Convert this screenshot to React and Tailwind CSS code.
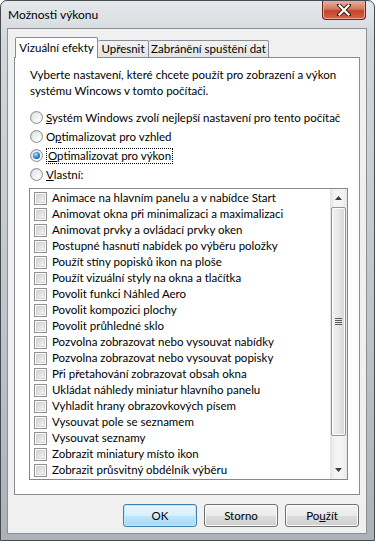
import React from 'react'

const items = [
  'Animace na hlavním panelu a v nabídce Start',
  'Animovat okna při minimalizaci a maximalizaci',
  'Animovat prvky a ovládací prvky oken',
  'Postupné hasnutí nabídek po výběru položky',
  'Použít stíny popisků ikon na ploše',
  'Použít vizuální styly na okna a tlačítka',
  'Povolit funkci Náhled Aero',
  'Povolit kompozici plochy',
  'Povolit průhledné sklo',
  'Pozvolna zobrazovat nebo vysouvat nabídky',
  'Pozvolna zobrazovat nebo vysouvat popisky',
  'Při přetahování zobrazovat obsah okna',
  'Ukládat náhledy miniatur hlavního panelu',
  'Vyhladit hrany obrazovkových písem',
  'Vysouvat pole se seznamem',
  'Vysouvat seznamy',
  'Zobrazit miniatury místo ikon',
  'Zobrazit průsvitný obdélník výběru',
]

function Radio({ checked }) {
  return (
    <span className="flex h-[13px] w-[13px] shrink-0 items-center justify-center rounded-full border border-[#8e8f8f] bg-[linear-gradient(135deg,#d2d2d2,#fafafa)]">
      <span className="flex h-[9px] w-[9px] items-center justify-center rounded-full bg-[linear-gradient(135deg,#e4e4e4,#ffffff)]">
        {checked && <span className="h-[7px] w-[7px] rounded-full bg-[radial-gradient(circle_at_40%_35%,#b4e0ff,#2a7bc4_55%,#0f4a85)]" />}
      </span>
    </span>
  )
}

function Check() {
  return (
    <span className="flex h-[13px] w-[13px] shrink-0 items-center justify-center border border-[#8e8f8f] bg-white">
      <span className="h-[9px] w-[9px] border border-[#d6d6d6] bg-[linear-gradient(135deg,#d0d0d0,#f6f6f6)]" />
    </span>
  )
}

function Btn({ children, def }) {
  return (
    <button
      className={
        def
          ? 'flex h-[23px] w-[74px] items-center justify-center rounded-[3px] border border-[#3c7fb1] bg-[linear-gradient(#eaf6fd_0%,#d9f0fc_50%,#bee6fd_51%,#a7d9f5_100%)] shadow-[inset_0_0_0_1px_#c3e7fd]'
          : 'flex h-[23px] w-[74px] items-center justify-center rounded-[3px] border border-[#707070] bg-[linear-gradient(#f2f2f2_0%,#ebebeb_50%,#dddddd_51%,#cfcfcf_100%)] shadow-[inset_0_0_0_1px_#fcfcfc]'
      }
    >
      {children}
    </button>
  )
}

export default function App() {
  return (
    <div
      className="h-[541px] w-[375px] overflow-hidden whitespace-nowrap bg-white text-[11.5px] text-black"
      style={{ fontFamily: 'Lato, "Liberation Sans", sans-serif' }}
    >
      <div className="flex h-full w-full flex-col rounded-t-[7px] border border-[#474b50] bg-[linear-gradient(#e6e9ec,#d3d7db_40px,#bfc4ca_60%,#adb2b9)]">
        {/* title bar */}
        <div className="flex h-[27px] shrink-0 items-start justify-between">
          <span className="pl-[7px] pt-[6px] text-[12px] leading-[16px]">Možnosti výkonu</span>
          <div className="mr-[8px] flex h-[19px] w-[44px] items-center justify-center rounded-b-[4px] border border-t-0 border-[#6a261b] bg-[linear-gradient(#eab1a3,#d4745c_45%,#c4412a_55%,#d8654a)] shadow-[inset_0_0_0_1px_#f0a594]">
            <svg width="14" height="12" viewBox="0 0 14 12">
              <path d="M2 1 L12 11 M12 1 L2 11" stroke="#3a1510" strokeWidth="4" strokeLinecap="square" />
              <path d="M2.5 1.5 L11.5 10.5 M11.5 1.5 L2.5 10.5" stroke="#ffffff" strokeWidth="2.2" strokeLinecap="square" />
            </svg>
          </div>
        </div>

        {/* client area */}
        <div className="ml-[6px] mr-[7px] mb-[7px] flex flex-1 flex-col border border-[#8a8f96] bg-[#f0f0f0] px-[6px] pt-[8px] pb-[6px]">
          {/* tabs */}
          <div className="flex h-[20px] shrink-0 items-end pl-[1px]">
            <div className="relative z-10 -mb-px flex h-[21px] w-[83px] items-start justify-center rounded-t-[2px] border border-b-0 border-[#898c95] bg-white pt-[2px] leading-[16px]">
              Vizuální efekty
            </div>
            <div className="flex h-[17px] w-[51px] items-center justify-center rounded-t-[2px] border border-b-0 border-l-0 border-[#898c95] bg-[linear-gradient(#f2f2f2,#e3e3e3)] leading-[16px]">
              Upřesnit
            </div>
            <div className="flex h-[17px] w-[120px] items-center justify-center rounded-t-[2px] border border-b-0 border-l-0 border-[#898c95] bg-[linear-gradient(#f2f2f2,#e3e3e3)] leading-[16px]">
              Zabránění spuštění dat
            </div>
          </div>

          {/* panel */}
          <div className="flex h-[438px] shrink-0 flex-col border border-[#898c95] bg-white px-[15px] pt-[9px]">
            <p className="leading-[16px]">
              Vyberte nastavení, které chcete použít pro zobrazení a výkon
              <br />
              systému Wincows v tomto počítači.
            </p>

            <div className="mt-[9px] flex flex-col">
              <label className="flex h-[19px] items-center gap-[3px]">
                <Radio />
                <span><u>S</u>ystém Windows zvolí nejlepší nastavení pro tento počítač</span>
              </label>
              <label className="flex h-[19px] items-center gap-[3px]">
                <Radio />
                <span>O<u>p</u>timalizovat pro vzhled</span>
              </label>
              <label className="flex h-[19px] items-center gap-[3px]">
                <Radio checked />
                <span className="border border-dotted border-black px-px leading-[14px]">
                  <u>O</u>ptimalizovat pro výkon
                </span>
              </label>
              <label className="flex h-[19px] items-center gap-[3px]">
                <Radio />
                <span><u>V</u>lastní:</span>
              </label>
            </div>

            {/* list */}
            <div className="-ml-px mr-[-4px] mt-[4px] flex h-[292px] border border-[#828790] bg-white">
              <div className="flex flex-1 flex-col overflow-hidden pl-[4px] pt-px">
                {items.map((t) => (
                  <div key={t} className="flex h-[16px] shrink-0 items-center gap-[5px]">
                    <Check />
                    <span className="leading-[16px]">{t}</span>
                  </div>
                ))}
              </div>
              {/* scrollbar */}
              <div className="flex w-[17px] shrink-0 flex-col bg-[linear-gradient(90deg,#e3e3e3,#f4f4f4_30%,#f4f4f4_70%,#e8e8e8)]">
                <div className="flex h-[18px] items-center justify-center">
                  <svg width="7" height="4" viewBox="0 0 7 4"><path d="M0 4 L3.5 0 L7 4 Z" fill="#3b3b3b" /></svg>
                </div>
                <div className="mx-px flex h-[229px] items-center justify-center rounded-[2px] border border-[#959595] bg-[linear-gradient(90deg,#f3f3f3,#e8e8e8_45%,#d6d6d6)] shadow-[inset_0_0_0_1px_#fbfbfb]">
                  <svg width="7" height="7" viewBox="0 0 7 7">
                    <path d="M0 0.5 H7 M0 2.5 H7 M0 4.5 H7 M0 6.5 H7" stroke="#5a5a5a" strokeWidth="1" />
                  </svg>
                </div>
                <div className="flex-1" />
                <div className="flex h-[18px] items-center justify-center">
                  <svg width="7" height="4" viewBox="0 0 7 4"><path d="M0 0 L3.5 4 L7 0 Z" fill="#3b3b3b" /></svg>
                </div>
              </div>
            </div>
          </div>

          {/* buttons */}
          <div className="mt-[9px] flex justify-end gap-[7px] pr-px">
            <Btn def>OK</Btn>
            <Btn>Storno</Btn>
            <Btn>Po<u>u</u>žít</Btn>
          </div>
        </div>
      </div>
    </div>
  )
}
